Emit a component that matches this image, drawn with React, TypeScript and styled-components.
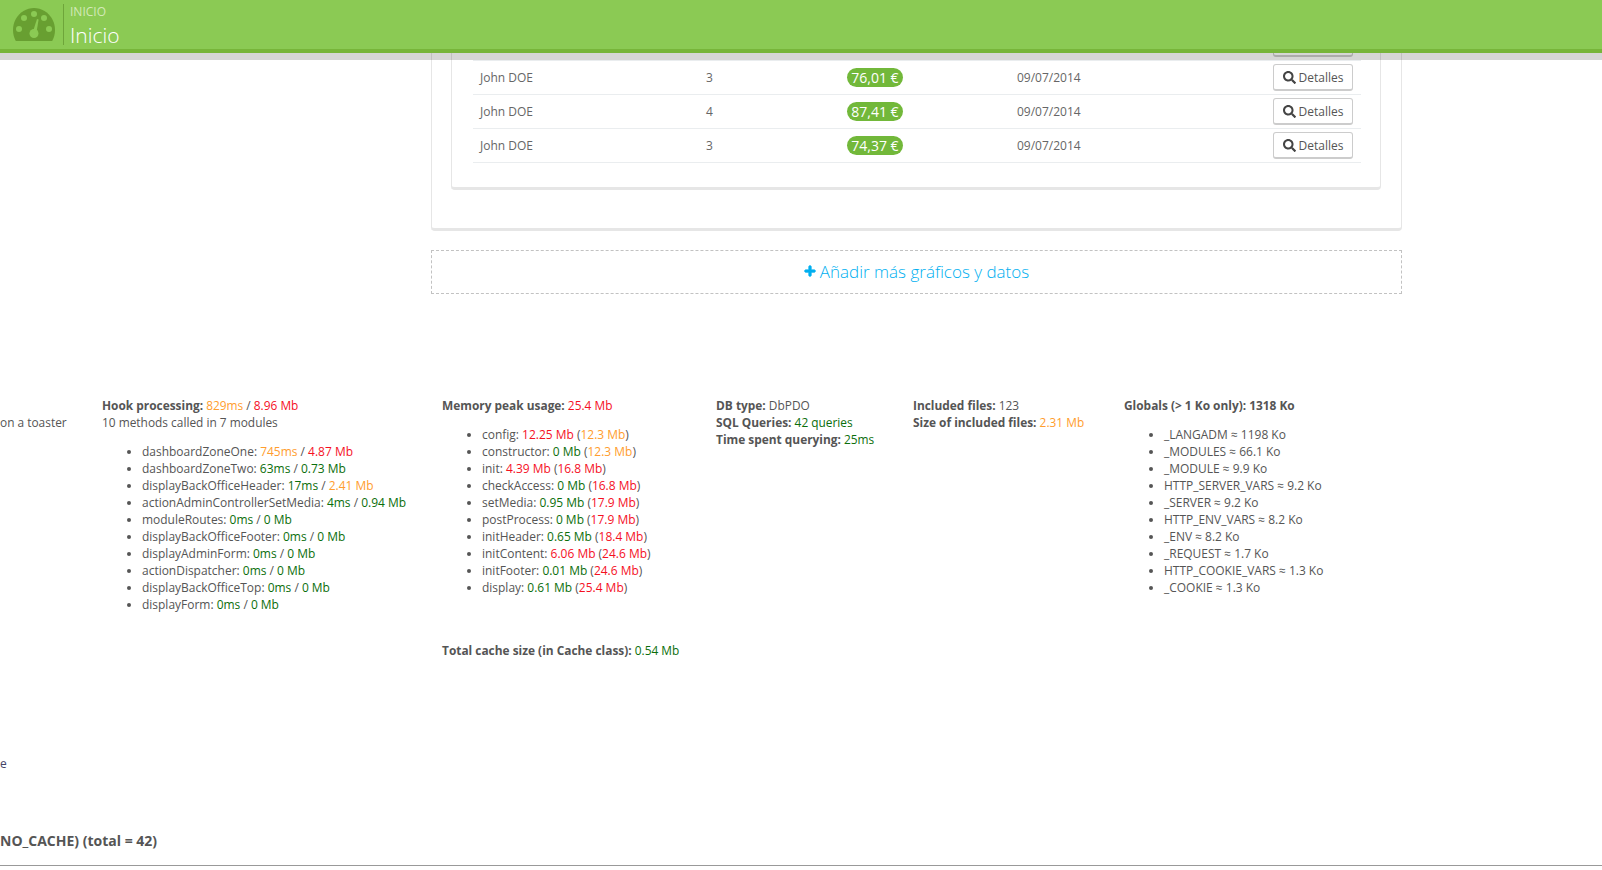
import React from "react";
import styled, { createGlobalStyle } from "styled-components";
import { FaPlus, FaSearch } from "react-icons/fa";

const Global = createGlobalStyle`
  html, body { margin: 0; padding: 0; background: #fff; }
  body { font-family: "Open Sans", "Liberation Sans", sans-serif; font-size: 12px; color: #555; }
`;

const Page = styled.div`
  position: relative;
  height: 870px;
  overflow: hidden;
  background: #fff;
`;

const Header = styled.header`
  position: absolute;
  top: 0;
  left: 0;
  right: 0;
  height: 49px;
  display: flex;
  align-items: center;
  padding-left: 13px;
  background: #8bca54;
  border-bottom: 4px solid #77b53a;
  box-shadow: 0 7px 0 rgba(0, 0, 0, 0.16);
`;

const HeaderTitles = styled.div`
  display: flex;
  flex-direction: column;
  height: 41px;
  margin-left: 8px;
  padding-left: 6px;
  border-left: 1px solid #6ea53a;
`;

const Crumb = styled.span`
  font-size: 12px;
  line-height: 16px;
  color: #d3e9b8;
  text-transform: uppercase;
`;

const Title = styled.h1`
  margin: 3px 0 0;
  font-size: 21px;
  line-height: 24px;
  font-weight: 300;
  color: #fff;
`;

const Dashboard = styled.section`
  width: 971px;
  margin-left: 431px;
`;

const OuterPanel = styled.div`
  box-sizing: border-box;
  padding: 0 20px 38px 19px;
  border: 1px solid #e6e6e6;
  border-top: 0;
  border-bottom-width: 3px;
  border-radius: 0 0 4px 4px;
`;

const InnerPanel = styled.div`
  box-sizing: border-box;
  width: 930px;
  padding: 27px 19px 24px 21px;
  border: 1px solid #e6e6e6;
  border-top: 0;
  border-bottom-width: 3px;
  border-radius: 0 0 4px 4px;
`;

const OrderRow = styled.div`
  display: grid;
  grid-template-columns: 226px 141px 170px 1fr auto;
  align-items: center;
  height: 33px;
  padding: 0 8px 0 7px;
  border-bottom: 1px solid #eaedef;
  font-size: 12px;
  color: #666;
`;

const Badge = styled.span`
  justify-self: start;
  width: 56px;
  height: 19px;
  border-radius: 10px;
  background: #72b83a;
  color: #fff;
  font-size: 14px;
  line-height: 19px;
  text-align: center;
`;

const DetailButton = styled.button`
  box-sizing: border-box;
  width: 80px;
  height: 27px;
  display: flex;
  align-items: center;
  justify-content: center;
  gap: 3px;
  padding: 0;
  background: #fff;
  border: 1px solid #ccc;
  border-bottom-width: 2px;
  border-radius: 3px;
  color: #555;
  font-family: inherit;
  font-size: 12px;
  svg { width: 13px; height: 13px; color: #444; }
`;

const AddBox = styled.div`
  box-sizing: border-box;
  height: 44px;
  margin-top: 19px;
  padding-bottom: 2px;
  display: flex;
  align-items: center;
  justify-content: center;
  gap: 4px;
  border: 1px dashed #c2c2c2;
  color: #00aff0;
  font-size: 17px;
  font-weight: 300;
  svg { width: 12px; height: 12px; stroke: currentColor; stroke-width: 40; }
`;

const Stats = styled.section`
  display: grid;
  grid-template-columns: 102px 340px 274px 197px 211px 1fr;
  margin-top: 103px;
  font-size: 11.9px;
  line-height: 17px;
`;

const Column = styled.div<{ $offset?: boolean }>`
  padding-top: ${(p) => (p.$offset ? "17px" : "0")};
  white-space: nowrap;
`;

const Line = styled.div``;

const Label = styled.b`
  font-size: 11.9px;
  font-weight: 700;
  color: #555;
`;

const toneColors = { ok: "#0b6e0b", warn: "#ff9d2e", bad: "#f5101f" };

const Val = styled.span<{ $tone: keyof typeof toneColors }>`
  color: ${(p) => toneColors[p.$tone]};
`;

const List = styled.ul`
  margin: 12px 0 0;
  padding: 0 0 0 40px;
  font-size: 11.97px;
`;

const CacheLine = styled.div`
  margin-top: 46px;
`;

const Stray = styled.div`
  margin-top: 96px;
  font-size: 12px;
  line-height: 17px;
  color: #446;
`;

const QueryTitle = styled.h3`
  margin: 59px 0 0;
  font-size: 14px;
  line-height: 20px;
  font-weight: 700;
  color: #555;
`;

const Rule = styled.hr`
  margin: 14px 0 0;
  border: 0;
  border-top: 1px solid #999;
`;

const Gauge = () => (
  <svg width="42" height="34" viewBox="0 0 42 34" aria-hidden="true" style={{ flex: "none" }}>
    <path d="M2.8 33 A21 22 0 1 1 39.2 33 Z" fill="#689f31" />
    <g fill="#8bca54">
      <circle cx="6" cy="21" r="3" />
      <circle cx="11" cy="10" r="3" />
      <circle cx="21" cy="6" r="3" />
      <circle cx="31" cy="10" r="3" />
      <circle cx="36" cy="21" r="3" />
      <circle cx="21" cy="25.5" r="4.5" />
      <path d="M19.5 25 L24 11 L25.6 11.5 L23.4 25 Z" />
    </g>
  </svg>
);

type Part = string | [string, keyof typeof toneColors];

const renderParts = (parts: Part[]) =>
  parts.map((p, i) =>
    typeof p === "string" ? <React.Fragment key={i}>{p}</React.Fragment> : <Val key={i} $tone={p[1]}>{p[0]}</Val>
  );

const orders = [
  { qty: "3", total: "76,01 €" },
  { qty: "3", total: "76,01 €" },
  { qty: "4", total: "87,41 €" },
  { qty: "3", total: "74,37 €" },
];

const hooks: [string, Part, Part][] = [
  ["dashboardZoneOne", ["745ms", "warn"], ["4.87 Mb", "bad"]],
  ["dashboardZoneTwo", ["63ms", "ok"], ["0.73 Mb", "ok"]],
  ["displayBackOfficeHeader", ["17ms", "ok"], ["2.41 Mb", "warn"]],
  ["actionAdminControllerSetMedia", ["4ms", "ok"], ["0.94 Mb", "ok"]],
  ["moduleRoutes", ["0ms", "ok"], ["0 Mb", "ok"]],
  ["displayBackOfficeFooter", ["0ms", "ok"], ["0 Mb", "ok"]],
  ["displayAdminForm", ["0ms", "ok"], ["0 Mb", "ok"]],
  ["actionDispatcher", ["0ms", "ok"], ["0 Mb", "ok"]],
  ["displayBackOfficeTop", ["0ms", "ok"], ["0 Mb", "ok"]],
  ["displayForm", ["0ms", "ok"], ["0 Mb", "ok"]],
];

const memory: [string, Part, Part][] = [
  ["config", ["12.25 Mb", "bad"], ["12.3 Mb", "warn"]],
  ["constructor", ["0 Mb", "ok"], ["12.3 Mb", "warn"]],
  ["init", ["4.39 Mb", "bad"], ["16.8 Mb", "bad"]],
  ["checkAccess", ["0 Mb", "ok"], ["16.8 Mb", "bad"]],
  ["setMedia", ["0.95 Mb", "ok"], ["17.9 Mb", "bad"]],
  ["postProcess", ["0 Mb", "ok"], ["17.9 Mb", "bad"]],
  ["initHeader", ["0.65 Mb", "ok"], ["18.4 Mb", "bad"]],
  ["initContent", ["6.06 Mb", "bad"], ["24.6 Mb", "bad"]],
  ["initFooter", ["0.01 Mb", "ok"], ["24.6 Mb", "bad"]],
  ["display", ["0.61 Mb", "ok"], ["25.4 Mb", "bad"]],
];

const globalsList = [
  "_LANGADM ≈ 1198 Ko",
  "_MODULES ≈ 66.1 Ko",
  "_MODULE ≈ 9.9 Ko",
  "HTTP_SERVER_VARS ≈ 9.2 Ko",
  "_SERVER ≈ 9.2 Ko",
  "HTTP_ENV_VARS ≈ 8.2 Ko",
  "_ENV ≈ 8.2 Ko",
  "_REQUEST ≈ 1.7 Ko",
  "HTTP_COOKIE_VARS ≈ 1.3 Ko",
  "_COOKIE ≈ 1.3 Ko",
];

export default function App() {
  return (
    <Page>
      <Global />
      <Dashboard>
        <OuterPanel>
          <InnerPanel>
            {orders.map((o, i) => (
              <OrderRow key={i}>
                <span>John DOE</span>
                <span>{o.qty}</span>
                <Badge>{o.total}</Badge>
                <span>09/07/2014</span>
                <DetailButton>
                  <FaSearch />
                  Detalles
                </DetailButton>
              </OrderRow>
            ))}
          </InnerPanel>
        </OuterPanel>
        <AddBox>
          <FaPlus />
          Añadir más gráficos y datos
        </AddBox>
      </Dashboard>

      <Stats>
        <Column $offset>
          <Line>on a toaster</Line>
        </Column>
        <Column>
          <Line>
            <Label>Hook processing: </Label>
            {renderParts([["829ms", "warn"], " / ", ["8.96 Mb", "bad"]])}
          </Line>
          <Line>10 methods called in 7 modules</Line>
          <List>
            {hooks.map(([name, a, b]) => (
              <li key={name}>
                {name}: {renderParts([a, " / ", b])}
              </li>
            ))}
          </List>
        </Column>
        <Column>
          <Line>
            <Label>Memory peak usage: </Label>
            <Val $tone="bad">25.4 Mb</Val>
          </Line>
          <List>
            {memory.map(([name, a, b]) => (
              <li key={name}>
                {name}: {renderParts([a, " (", b, ")"])}
              </li>
            ))}
          </List>
          <CacheLine>
            <Label>Total cache size (in Cache class): </Label>
            <Val $tone="ok">0.54 Mb</Val>
          </CacheLine>
        </Column>
        <Column>
          <Line>
            <Label>DB type: </Label>DbPDO
          </Line>
          <Line>
            <Label>SQL Queries: </Label>
            <Val $tone="ok">42 queries</Val>
          </Line>
          <Line>
            <Label>Time spent querying: </Label>
            <Val $tone="ok">25ms</Val>
          </Line>
        </Column>
        <Column>
          <Line>
            <Label>Included files: </Label>123
          </Line>
          <Line>
            <Label>Size of included files: </Label>
            <Val $tone="warn">2.31 Mb</Val>
          </Line>
        </Column>
        <Column>
          <Line>
            <Label>Globals (&gt; 1 Ko only): 1318 Ko</Label>
          </Line>
          <List>
            {globalsList.map((g) => (
              <li key={g}>{g}</li>
            ))}
          </List>
        </Column>
      </Stats>

      <Stray>e</Stray>
      <QueryTitle>NO_CACHE) (total = 42)</QueryTitle>
      <Rule />

      <Header>
        <Gauge />
        <HeaderTitles>
          <Crumb>Inicio</Crumb>
          <Title>Inicio</Title>
        </HeaderTitles>
      </Header>
    </Page>
  );
}
